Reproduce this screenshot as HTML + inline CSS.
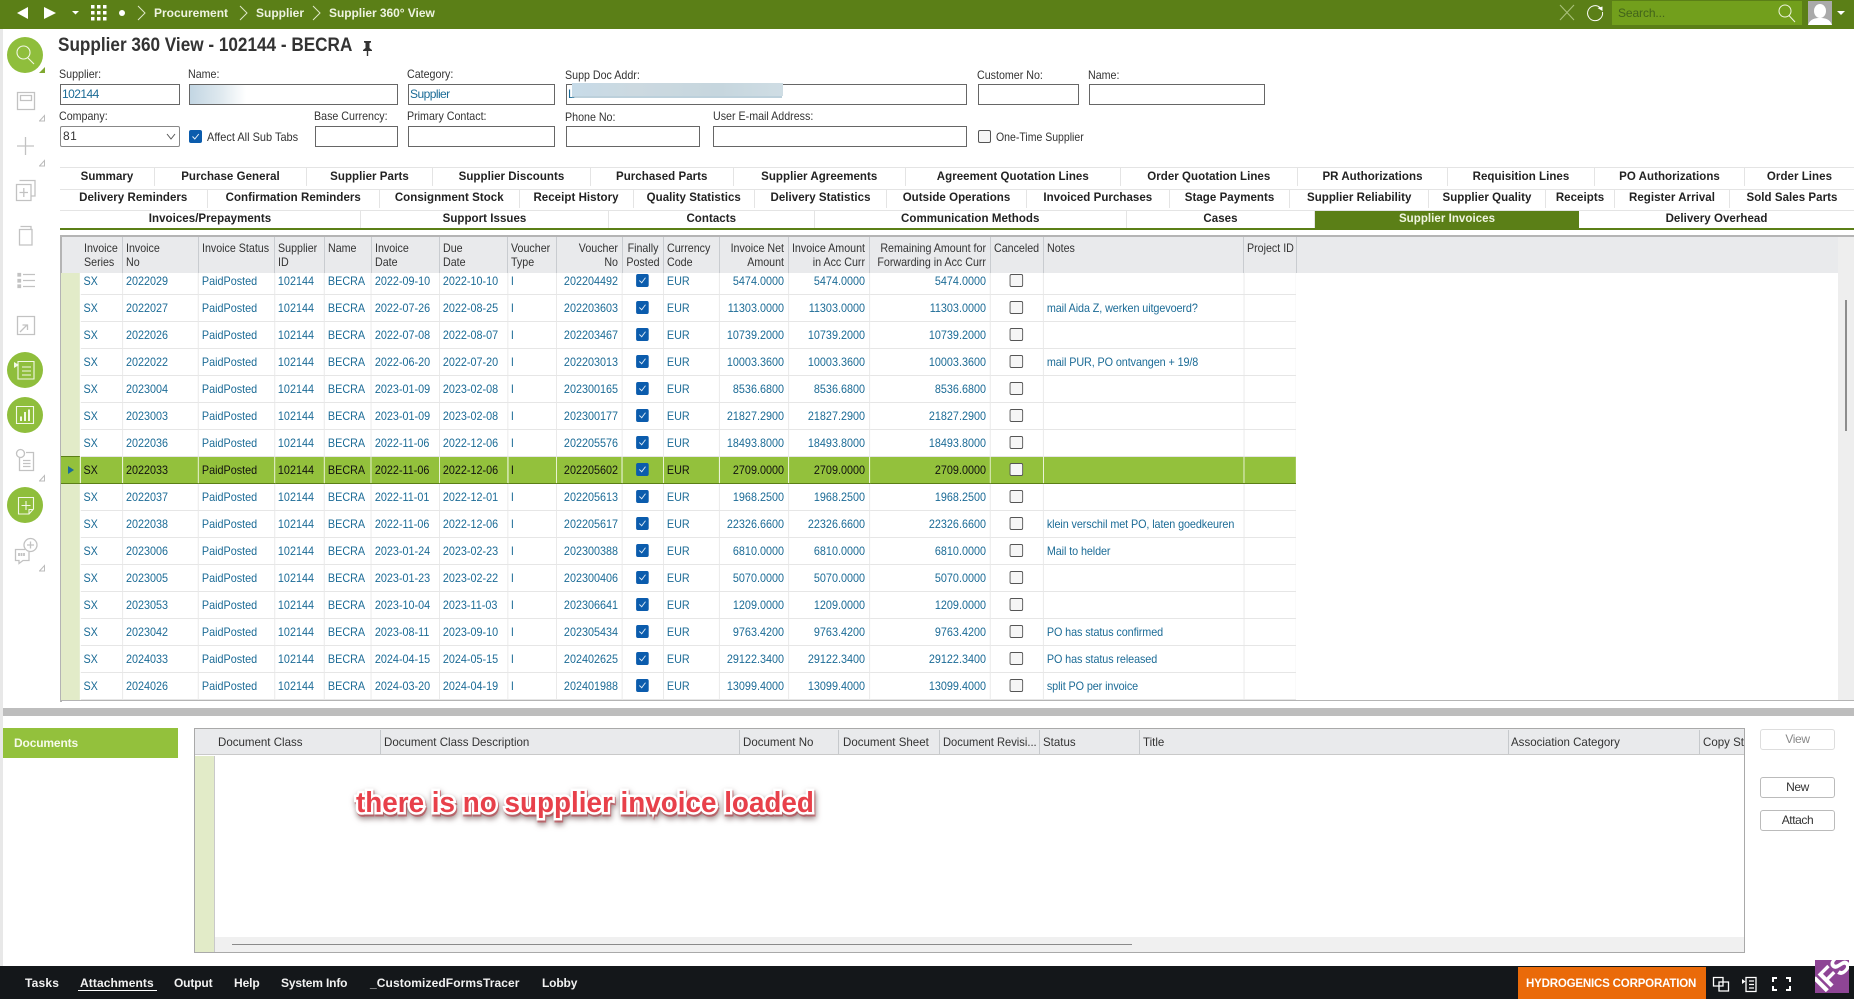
<!DOCTYPE html>
<html><head><meta charset="utf-8"><title>Supplier 360 View</title>
<style>
*{box-sizing:border-box}
html,body{margin:0;padding:0;background:#fff}
body{width:1854px;height:999px;position:relative;overflow:hidden;font-family:"Liberation Sans",sans-serif;color:#333;font-size:12px}
.a{position:absolute}
#top{left:0;top:0;width:1854px;height:29px;background:#5b7f17}
.bc{position:absolute;top:5px;color:#eef3e0;font-weight:bold;font-size:12px;line-height:16px;white-space:nowrap}
.lb{position:absolute;font-size:12px;line-height:14px;color:#333;white-space:nowrap;transform:scaleX(.89);transform-origin:0 0}
.in{position:absolute;height:21px;border:1px solid #666;background:#fff;font-size:12px;line-height:18px;padding-left:1px;color:#1b6b96;letter-spacing:-.55px;white-space:nowrap;overflow:hidden}
.cb{position:absolute;width:13px;height:13px;border-radius:2px}
.cb.on{background:#0b5cad}
.cb.off{background:#f6f6f6;border:1px solid #555}
.tr{position:absolute;left:60px;width:1794px;display:flex;border-top:1px solid #e4e4e4}
.tr div{height:100%;text-align:center;font-weight:bold;font-size:11.5px;color:#222;border-right:1px solid #e4e4e4;white-space:nowrap;flex:none;overflow:hidden;letter-spacing:.05px}
.tr div:last-child{border-right:0}
.tr div.act{background:#5b7f17;color:#f0f5e0;border-right:0;font-weight:bold}
#gridwrap{left:61px;top:273px;width:1235px;height:427px;overflow:hidden}
#g{position:absolute;left:0;top:-5.5px;border-collapse:collapse;table-layout:fixed;width:1372.2px;font-size:12px;color:#1b6b96;transform:scaleX(.9);transform-origin:0 0}
#g td{height:27px;padding:0 3.33px;border-right:1px solid #e8e8e8;border-bottom:1px solid #e6e6e6;white-space:nowrap;overflow:hidden;line-height:14px}
#g td:nth-child(17){letter-spacing:-.1px}
#g td.h{background:#e2ebc8;border-right:1px solid #fff;border-bottom:0;padding:0}
#g td.r{text-align:right;padding-right:4.44px}
#g td.c{padding:0;position:relative}
#g i{position:absolute;left:0;right:1.5px;margin:auto;top:6px;width:14.44px;height:13px;border-radius:2px;display:block}
#g i.y{background:#0b5cad}
#g i.y:after{content:"";position:absolute;left:5.2px;top:2.4px;width:3.2px;height:6px;border:solid #dce9f5;border-width:0 1px 1px 0;transform:rotate(40deg)}
#g i.n{background:#f6f6f6;border:1px solid #555}
#g tr.s td{background:#93c13c;color:#111;border-right:1px solid #e5f0cc;border-top:1px solid #5b7f17;border-bottom:1px solid #5b7f17}
#g tr.s td.h{background:#93c13c;border-right:1px solid #e5f0cc;border-top:1px solid #5b7f17;border-bottom:1px solid #5b7f17}
.gh{position:absolute;top:241px;font-size:12px;line-height:14px;color:#333;white-space:nowrap;transform:scaleX(.89);transform-origin:0 0}
.gh.R{text-align:right;transform-origin:100% 0}
.gh.C{text-align:center;transform-origin:50% 0}
.gs{position:absolute;top:237px;height:36px;width:1px;background:#c9ccd0}
.dh{position:absolute;top:735px;font-size:12px;line-height:14px;color:#333;white-space:nowrap;transform:scaleX(.96);transform-origin:0 0}
.ds{position:absolute;top:730px;height:24px;width:1px;background:#c6c9cc}
.btn{position:absolute;left:1760px;width:75px;height:21px;border:1px solid #bbb;border-radius:3px;background:#fff;text-align:center;font-size:12px;line-height:19px;letter-spacing:-.4px;color:#333}
.ft{position:absolute;top:975px;color:#f2f2f2;font-weight:bold;font-size:12px;line-height:16px;white-space:nowrap}
.sic{position:absolute;fill:none;stroke:#c2c2c2;stroke-width:1.3}
.cir{position:absolute;left:7px;width:36px;height:36px;border-radius:50%;background:#8fbe3c}
.cir svg{position:absolute;left:0;top:0;fill:none;stroke:#f3f8e6;stroke-width:1.1}
</style></head><body>

<div class="a" style="left:0;top:29px;width:3px;height:937px;background:#e8e8e8"></div>

<div id="top" class="a"></div>
<svg class="a" style="left:0;top:0" width="170" height="29">
<path d="M28 7V19L17 13Z" fill="#fff"/><path d="M44 7V19L56 13Z" fill="#fff"/><path d="M72 11H79L75.5 14.5Z" fill="#fff"/>
<g fill="#fff"><rect x="91" y="5" width="3.5" height="3.5"/><rect x="97" y="5" width="3.5" height="3.5"/><rect x="103" y="5" width="3.5" height="3.5"/><rect x="91" y="11" width="3.5" height="3.5"/><rect x="97" y="11" width="3.5" height="3.5"/><rect x="103" y="11" width="3.5" height="3.5"/><rect x="91" y="17" width="3.5" height="3.5"/><rect x="97" y="17" width="3.5" height="3.5"/><rect x="103" y="17" width="3.5" height="3.5"/></g>
<circle cx="122" cy="13" r="3" fill="#fff"/><path d="M138 6L145 13L138 20" stroke="#dfe8c8" fill="none"/></svg>
<div class="bc" style="left:154px">Procurement</div>
<svg class="a" style="left:238px;top:0" width="12" height="29"><path d="M2 6L9 13L2 20" stroke="#dfe8c8" fill="none"/></svg>
<div class="bc" style="left:256px">Supplier</div>
<svg class="a" style="left:311px;top:0" width="12" height="29"><path d="M2 6L9 13L2 20" stroke="#dfe8c8" fill="none"/></svg>
<div class="bc" style="left:329px;letter-spacing:-.05px">Supplier 360° View</div>

<svg class="a" style="left:1556px;top:0" width="50" height="29" fill="none"><path d="M4 5L18 20M18 5L4 20" stroke="#a9c07a" stroke-width="1.1"/><path d="M44 7.5A7.5 7.5 0 1 0 46.5 12" stroke="#fff" stroke-width="1"/><path d="M41.5 8L46.5 6.5V11Z" fill="#fff"/></svg>
<div class="a" style="left:1612px;top:1px;width:190px;height:24px;background:#729f1c"></div>
<div class="a" style="left:1618px;top:6px;font-size:12px;line-height:14px;color:#42631a;letter-spacing:-.1px">Search...</div>
<svg class="a" style="left:1776px;top:2px" width="22" height="22" fill="none" stroke="#eef4dd" stroke-width="1"><circle cx="9" cy="9" r="6"/><path d="M13 13.5L19 20"/></svg>
<svg class="a" style="left:1808px;top:1px" width="24" height="24"><rect width="24" height="24" fill="#aaa"/><ellipse cx="12" cy="10" rx="6" ry="7" fill="#fff"/><path d="M0 24C2 18 7 17 12 17S22 18 24 24Z" fill="#fff"/></svg>
<svg class="a" style="left:1836px;top:9px" width="10" height="7"><path d="M1 2H9L5 6Z" fill="#fff"/></svg>

<!-- side icons -->
<div class="cir" style="top:37px"><svg width="36" height="36"><circle cx="16.5" cy="15.5" r="6.5"/><path d="M21 21L27 27"/></svg></div>
<svg class="a" style="left:39px;top:67px" width="7" height="7"><path d="M6 0V6H0Z" fill="#7fa82f"/></svg>
<svg class="sic" style="left:16px;top:91px" width="20" height="20"><path d="M1.5 1.5H18.5V18.5H1.5Z"/><path d="M4.5 4.5H15.5V9.5H4.5Z"/></svg>
<svg class="sic" style="left:16px;top:137px" width="20" height="20"><path d="M9.5 0V18M1 9H18"/></svg>
<svg class="sic" style="left:15px;top:179px" width="22" height="23"><path d="M4.5 1.5H20V17H16"/><path d="M1.5 5.5H16V21.5H1.5Z"/><path d="M8.8 9V18M4.5 13.5H13"/></svg>
<svg class="sic" style="left:18px;top:225px" width="16" height="21"><path d="M1.5 4.5H14V20H1.5Z"/><path d="M2.5 1.5H13V4.5"/></svg>
<svg class="sic" style="left:17px;top:272px" width="19" height="17"><path d="M6 2.5H18M6 8.5H18M6 14.5H18"/><path d="M1 1.5H3.5V4H1ZM1 7.5H3.5V10H1ZM1 13H3.5V15.5H1Z" fill="#c2c2c2"/></svg>
<svg class="sic" style="left:16px;top:315px" width="20" height="21"><path d="M1.5 1.5H18.5V19.5H1.5Z"/><path d="M4 17L11 10M6.5 10H11.5V15"/></svg>
<div class="cir" style="top:352px"><svg width="36" height="36"><path d="M11 9.5H27V27H11Z"/><path d="M15 15H24M15 19H24M15 23H24"/><path d="M7 10V16L12 13Z" fill="#f3f8e6" stroke="none"/></svg></div>
<div class="cir" style="top:397px"><svg width="36" height="36"><path d="M9.5 9.5H26.5V26.5H9.5Z"/><path d="M13 19.5H15V24H13ZM17 15H19V24H17ZM21 12.5H23V24H21Z" fill="#f3f8e6" stroke="none"/></svg></div>
<svg class="sic" style="left:15px;top:448px" width="20" height="24"><circle cx="5.5" cy="5.5" r="4"/><path d="M11 4.5H18.5V22.5H4.5V10"/><path d="M8 12.5H15.5M8 15.5H15.5M8 18.5H15.5"/></svg>
<div class="cir" style="top:487px"><svg width="36" height="36"><path d="M11.5 10.5H26.5V22L22 27H11.5Z"/><path d="M19 14V23M14.5 18.5H23.5"/><path d="M22 27V22.5H26.5"/></svg></div>
<svg class="sic" style="left:13px;top:537px" width="26" height="28"><circle cx="17.5" cy="8" r="6.5"/><path d="M17.5 4.5V11.5M14 8H21"/><path d="M12 12.5H2.5V23.5H6V26.5L10 23.5H16V15"/><path d="M6 16V19M8.5 16V19M11 16V19" stroke-width="1.8"/></svg>
<svg class="a" style="left:39px;top:114px" width="7" height="8" fill="none" stroke="#bbb"><path d="M5.5 1.5V7H0.5Z"/></svg>
<svg class="a" style="left:39px;top:159px" width="7" height="8" fill="none" stroke="#bbb"><path d="M5.5 1.5V7H0.5Z"/></svg>
<svg class="a" style="left:39px;top:474px" width="7" height="8" fill="none" stroke="#bbb"><path d="M5.5 1.5V7H0.5Z"/></svg>
<svg class="a" style="left:39px;top:564px" width="7" height="8" fill="none" stroke="#bbb"><path d="M5.5 1.5V7H0.5Z"/></svg>

<!-- header -->
<div class="a" style="left:58px;top:35px;font-size:19px;line-height:22px;font-weight:bold;color:#333;white-space:nowrap;transform:scaleX(.903);transform-origin:0 0">Supplier 360 View - 102144 - BECRA</div>
<svg class="a" style="left:362px;top:40px" width="11" height="16"><path d="M2 1H9V2.5L7.5 3V8L10 10V11H6.2V16H4.8V11H1V10L3.5 8V3L2 2.5Z" fill="#333"/></svg>

<div class="lb" style="left:59px;top:67px">Supplier:</div>
<div class="lb" style="left:188px;top:67px">Name:</div>
<div class="lb" style="left:407px;top:67px">Category:</div>
<div class="lb" style="left:565px;top:68px">Supp Doc Addr:</div>
<div class="lb" style="left:977px;top:68px">Customer No:</div>
<div class="lb" style="left:1088px;top:68px">Name:</div>
<div class="in" style="left:60px;top:84px;width:120px">102144</div>
<div class="in" style="left:189px;top:84px;width:209px"></div>
<div class="a" style="left:190px;top:85px;width:56px;height:19px;background:linear-gradient(90deg,#c3d6e3,#dfe9ef 55%,#fff)"></div>
<div class="in" style="left:408px;top:84px;width:147px">Supplier</div>
<div class="in" style="left:566px;top:84px;width:401px">L</div>
<div class="a" style="left:572px;top:83px;width:211px;height:13px;background:linear-gradient(90deg,#c7dbe8,#ccd9e0 30%,#c6d6de 70%,#cfdde4)"></div>
<div class="a" style="left:572px;top:96px;width:210px;height:2px;background:#7aa2b8;opacity:.5"></div>
<div class="in" style="left:978px;top:84px;width:101px"></div>
<div class="in" style="left:1089px;top:84px;width:176px"></div>

<div class="lb" style="left:59px;top:109px">Company:</div>
<div class="in" style="left:60px;top:126px;width:120px;border-color:#888;border-radius:2px;color:#333;letter-spacing:.4px;padding-left:2px">81</div>
<svg class="a" style="left:165px;top:132px" width="12" height="9" fill="none" stroke="#555"><path d="M2 2L6 7L10 2"/></svg>
<div class="cb on" style="left:189px;top:130px"></div>
<svg class="a" style="left:189px;top:130px" width="13" height="13" fill="none" stroke="#e6f0fa"><path d="M3.5 6.5L5.8 9L9.8 4"/></svg>
<div class="lb" style="left:207px;top:130px;transform:scaleX(.915)">Affect All Sub Tabs</div>
<div class="lb" style="left:314px;top:109px">Base Currency:</div>
<div class="in" style="left:315px;top:126px;width:83px"></div>
<div class="lb" style="left:407px;top:109px">Primary Contact:</div>
<div class="in" style="left:408px;top:126px;width:147px"></div>
<div class="lb" style="left:565px;top:110px">Phone No:</div>
<div class="in" style="left:566px;top:126px;width:134px"></div>
<div class="lb" style="left:713px;top:109px">User E-mail Address:</div>
<div class="in" style="left:713px;top:126px;width:254px"></div>
<div class="cb off" style="left:978px;top:130px"></div>
<div class="lb" style="left:996px;top:130px;transform:scaleX(.875)">One-Time Supplier</div>

<!-- tabs -->
<div class="tr" style="top:167px;height:19px;line-height:18px">
<div style="width:95px">Summary</div><div style="width:152px">Purchase General</div><div style="width:126px">Supplier Parts</div><div style="width:158px">Supplier Discounts</div><div style="width:142.5px">Purchased Parts</div><div style="width:172.5px">Supplier Agreements</div><div style="width:214.6px">Agreement Quotation Lines</div><div style="width:177.4px">Order Quotation Lines</div><div style="width:150px">PR Authorizations</div><div style="width:147px">Requisition Lines</div><div style="width:150px">PO Authorizations</div><div style="width:109px">Order Lines</div>
</div>
<div class="tr" style="top:189px;height:19px;line-height:17px">
<div style="width:147.5px">Delivery Reminders</div><div style="width:172.5px">Confirmation Reminders</div><div style="width:139.5px">Consignment Stock</div><div style="width:114px">Receipt History</div><div style="width:121.5px">Quality Statistics</div><div style="width:132px">Delivery Statistics</div><div style="width:140px">Outside Operations</div><div style="width:142.6px">Invoiced Purchases</div><div style="width:120.9px">Stage Payments</div><div style="width:138.5px">Supplier Reliability</div><div style="width:117px">Supplier Quality</div><div style="width:69px">Receipts</div><div style="width:115px">Register Arrival</div><div style="width:124px">Sold Sales Parts</div>
</div>
<div class="tr" style="top:210px;height:18px;line-height:17px">
<div style="width:301px">Invoices/Prepayments</div><div style="width:248px">Support Issues</div><div style="width:205.5px">Contacts</div><div style="width:312.5px">Communication Methods</div><div style="width:188px">Cases</div><div class="act" style="width:264px">Supplier Invoices</div><div style="width:275px">Delivery Overhead</div>
</div>
<div class="a" style="left:60px;top:228px;width:1794px;height:2px;background:#5b7f17"></div>

<!-- main grid -->
<div class="a" style="left:60px;top:235px;width:1794px;height:2px;background:#b4b4b4"></div>
<div class="a" style="left:60px;top:235px;width:2px;height:467px;background:#b4b4b4"></div>
<div class="a" style="left:62px;top:237px;width:1776px;height:36px;background:#e9eaec"></div>
<div class="a" style="left:1838px;top:237px;width:16px;height:463px;background:#eee"></div>
<div class="a" style="left:1845px;top:300px;width:2px;height:131px;background:#8c8c8c"></div>

<div class="gs" style="left:122px"></div><div class="gs" style="left:198px"></div><div class="gs" style="left:274px"></div><div class="gs" style="left:324px"></div><div class="gs" style="left:371px"></div><div class="gs" style="left:439px"></div><div class="gs" style="left:507px"></div><div class="gs" style="left:556px"></div><div class="gs" style="left:622px"></div><div class="gs" style="left:663px"></div><div class="gs" style="left:719px"></div><div class="gs" style="left:788px"></div><div class="gs" style="left:869px"></div><div class="gs" style="left:990px"></div><div class="gs" style="left:1043px"></div><div class="gs" style="left:1243px"></div><div class="gs" style="left:1296px"></div>
<div class="gh" style="left:84px">Invoice<br>Series</div>
<div class="gh" style="left:126px">Invoice<br>No</div>
<div class="gh" style="left:202px">Invoice Status</div>
<div class="gh" style="left:278px">Supplier<br>ID</div>
<div class="gh" style="left:328px">Name</div>
<div class="gh" style="left:375px">Invoice<br>Date</div>
<div class="gh" style="left:443px">Due<br>Date</div>
<div class="gh" style="left:511px">Voucher<br>Type</div>
<div class="gh R" style="left:538px;width:80px">Voucher<br>No</div>
<div class="gh C" style="left:612.5px;width:60px">Finally<br>Posted</div>
<div class="gh" style="left:667px">Currency<br>Code</div>
<div class="gh R" style="left:694px;width:90px">Invoice Net<br>Amount</div>
<div class="gh R" style="left:745px;width:120px">Invoice Amount<br>in Acc Curr</div>
<div class="gh R" style="left:826px;width:160px">Remaining Amount for<br>Forwarding in Acc Curr</div>
<div class="gh" style="left:994px">Canceled</div>
<div class="gh" style="left:1047px">Notes</div>
<div class="gh" style="left:1247px">Project ID</div>

<div id="gridwrap" class="a">
<table id="g">
<colgroup><col style="width:21.11px"><col style="width:47.22px"><col style="width:84.44px"><col style="width:84.44px"><col style="width:55.56px"><col style="width:52.22px"><col style="width:75.56px"><col style="width:75.56px"><col style="width:54.44px"><col style="width:73.33px"><col style="width:45.56px"><col style="width:62.22px"><col style="width:76.67px"><col style="width:90px"><col style="width:134.44px"><col style="width:58.89px"><col style="width:222.78px"><col style="width:58.33px"></colgroup>
<tr><td class="h"><td>SX<td>2022029<td>PaidPosted<td>102144<td>BECRA<td>2022-09-10<td>2022-10-10<td>I<td class="r">202204492<td class="c"><i class="y"></i><td>EUR<td class="r">5474.0000<td class="r">5474.0000<td class="r">5474.0000<td class="c"><i class="n"></i><td><td></tr>
<tr><td class="h"><td>SX<td>2022027<td>PaidPosted<td>102144<td>BECRA<td>2022-07-26<td>2022-08-25<td>I<td class="r">202203603<td class="c"><i class="y"></i><td>EUR<td class="r">11303.0000<td class="r">11303.0000<td class="r">11303.0000<td class="c"><i class="n"></i><td>mail Aida Z, werken uitgevoerd?<td></tr>
<tr><td class="h"><td>SX<td>2022026<td>PaidPosted<td>102144<td>BECRA<td>2022-07-08<td>2022-08-07<td>I<td class="r">202203467<td class="c"><i class="y"></i><td>EUR<td class="r">10739.2000<td class="r">10739.2000<td class="r">10739.2000<td class="c"><i class="n"></i><td><td></tr>
<tr><td class="h"><td>SX<td>2022022<td>PaidPosted<td>102144<td>BECRA<td>2022-06-20<td>2022-07-20<td>I<td class="r">202203013<td class="c"><i class="y"></i><td>EUR<td class="r">10003.3600<td class="r">10003.3600<td class="r">10003.3600<td class="c"><i class="n"></i><td>mail PUR, PO ontvangen + 19/8<td></tr>
<tr><td class="h"><td>SX<td>2023004<td>PaidPosted<td>102144<td>BECRA<td>2023-01-09<td>2023-02-08<td>I<td class="r">202300165<td class="c"><i class="y"></i><td>EUR<td class="r">8536.6800<td class="r">8536.6800<td class="r">8536.6800<td class="c"><i class="n"></i><td><td></tr>
<tr><td class="h"><td>SX<td>2023003<td>PaidPosted<td>102144<td>BECRA<td>2023-01-09<td>2023-02-08<td>I<td class="r">202300177<td class="c"><i class="y"></i><td>EUR<td class="r">21827.2900<td class="r">21827.2900<td class="r">21827.2900<td class="c"><i class="n"></i><td><td></tr>
<tr><td class="h"><td>SX<td>2022036<td>PaidPosted<td>102144<td>BECRA<td>2022-11-06<td>2022-12-06<td>I<td class="r">202205576<td class="c"><i class="y"></i><td>EUR<td class="r">18493.8000<td class="r">18493.8000<td class="r">18493.8000<td class="c"><i class="n"></i><td><td></tr>
<tr class="s"><td class="h"><td>SX<td>2022033<td>PaidPosted<td>102144<td>BECRA<td>2022-11-06<td>2022-12-06<td>I<td class="r">202205602<td class="c"><i class="y"></i><td>EUR<td class="r">2709.0000<td class="r">2709.0000<td class="r">2709.0000<td class="c"><i class="n"></i><td><td></tr>
<tr><td class="h"><td>SX<td>2022037<td>PaidPosted<td>102144<td>BECRA<td>2022-11-01<td>2022-12-01<td>I<td class="r">202205613<td class="c"><i class="y"></i><td>EUR<td class="r">1968.2500<td class="r">1968.2500<td class="r">1968.2500<td class="c"><i class="n"></i><td><td></tr>
<tr><td class="h"><td>SX<td>2022038<td>PaidPosted<td>102144<td>BECRA<td>2022-11-06<td>2022-12-06<td>I<td class="r">202205617<td class="c"><i class="y"></i><td>EUR<td class="r">22326.6600<td class="r">22326.6600<td class="r">22326.6600<td class="c"><i class="n"></i><td>klein verschil met PO, laten goedkeuren<td></tr>
<tr><td class="h"><td>SX<td>2023006<td>PaidPosted<td>102144<td>BECRA<td>2023-01-24<td>2023-02-23<td>I<td class="r">202300388<td class="c"><i class="y"></i><td>EUR<td class="r">6810.0000<td class="r">6810.0000<td class="r">6810.0000<td class="c"><i class="n"></i><td>Mail to helder<td></tr>
<tr><td class="h"><td>SX<td>2023005<td>PaidPosted<td>102144<td>BECRA<td>2023-01-23<td>2023-02-22<td>I<td class="r">202300406<td class="c"><i class="y"></i><td>EUR<td class="r">5070.0000<td class="r">5070.0000<td class="r">5070.0000<td class="c"><i class="n"></i><td><td></tr>
<tr><td class="h"><td>SX<td>2023053<td>PaidPosted<td>102144<td>BECRA<td>2023-10-04<td>2023-11-03<td>I<td class="r">202306641<td class="c"><i class="y"></i><td>EUR<td class="r">1209.0000<td class="r">1209.0000<td class="r">1209.0000<td class="c"><i class="n"></i><td><td></tr>
<tr><td class="h"><td>SX<td>2023042<td>PaidPosted<td>102144<td>BECRA<td>2023-08-11<td>2023-09-10<td>I<td class="r">202305434<td class="c"><i class="y"></i><td>EUR<td class="r">9763.4200<td class="r">9763.4200<td class="r">9763.4200<td class="c"><i class="n"></i><td>PO has status confirmed<td></tr>
<tr><td class="h"><td>SX<td>2024033<td>PaidPosted<td>102144<td>BECRA<td>2024-04-15<td>2024-05-15<td>I<td class="r">202402625<td class="c"><i class="y"></i><td>EUR<td class="r">29122.3400<td class="r">29122.3400<td class="r">29122.3400<td class="c"><i class="n"></i><td>PO has status released<td></tr>
<tr><td class="h"><td>SX<td>2024026<td>PaidPosted<td>102144<td>BECRA<td>2024-03-20<td>2024-04-19<td>I<td class="r">202401988<td class="c"><i class="y"></i><td>EUR<td class="r">13099.4000<td class="r">13099.4000<td class="r">13099.4000<td class="c"><i class="n"></i><td>split PO per invoice<td></tr>
</table>
</div>
<svg class="a" style="left:67px;top:465px" width="8" height="10"><path d="M1 1V9L7 5Z" fill="#1b6b96"/></svg>
<div class="a" style="left:60px;top:700px;width:1794px;height:1px;background:#b4b4b4"></div>
<div class="a" style="left:3px;top:708px;width:1851px;height:8px;background:#bdbdbd"></div>

<!-- documents -->
<div class="a" style="left:3px;top:728px;width:175px;height:30px;background:#93c13c"></div>
<div class="a" style="left:14px;top:735px;color:#f6fae9;font-weight:bold;font-size:12px;line-height:16px;letter-spacing:-.15px">Documents</div>

<div class="a" style="left:194px;top:728px;width:1551px;height:225px;border:1px solid #a9a9a9;background:#fff"></div>
<div class="a" style="left:195px;top:729px;width:1549px;height:26px;background:#e9eaec;border-bottom:1px solid #c9c9c9"></div>
<div class="a" style="left:195px;top:756px;width:20px;height:196px;background:#e2ebc8;border-right:1px solid #c9c9c9"></div>
<div class="a" style="left:215px;top:937px;width:1529px;height:15px;background:#f0f0f0"></div>
<div class="a" style="left:232px;top:944px;width:900px;height:1px;background:#8a8a8a"></div>
<div class="ds" style="left:380px"></div><div class="ds" style="left:739px"></div><div class="ds" style="left:838px"></div><div class="ds" style="left:939px"></div><div class="ds" style="left:1039px"></div><div class="ds" style="left:1139px"></div><div class="ds" style="left:1508px"></div><div class="ds" style="left:1699px"></div>
<div class="dh" style="left:218px">Document Class</div>
<div class="dh" style="left:384px">Document Class Description</div>
<div class="dh" style="left:743px">Document No</div>
<div class="dh" style="left:843px">Document Sheet</div>
<div class="dh" style="left:943px;transform:scaleX(.93)">Document Revisi...</div>
<div class="dh" style="left:1043px">Status</div>
<div class="dh" style="left:1143px">Title</div>
<div class="dh" style="left:1511px">Association Category</div>
<div class="dh" style="left:1703px;width:43px;overflow:hidden">Copy Status</div>

<div class="a" style="left:356px;top:785px;font-size:29px;line-height:36px;font-weight:bold;color:#e8404a;white-space:nowrap;-webkit-text-stroke:5px #fff;paint-order:stroke fill;transform:scaleX(.96);transform-origin:0 0;filter:drop-shadow(1px 2px 0 rgba(190,50,60,.55)) drop-shadow(1px 3px 3px rgba(80,50,50,.6))">there is no supplier invoice loaded</div>

<div class="btn" style="top:729px;border-color:#ddd;color:#888">View</div>
<div class="btn" style="top:777px">New</div>
<div class="btn" style="top:810px">Attach</div>

<!-- footer -->
<div class="a" style="left:0;top:966px;width:1854px;height:33px;background:#14171a"></div>
<div class="ft" style="left:25px;letter-spacing:.2px">Tasks</div>
<div class="ft" style="left:80px;letter-spacing:.1px">Attachments</div>
<div class="a" style="left:78px;top:990px;width:79px;height:1px;background:#fff"></div>
<div class="ft" style="left:174px;letter-spacing:-.15px">Output</div>
<div class="ft" style="left:234px;letter-spacing:-.1px">Help</div>
<div class="ft" style="left:281px;letter-spacing:-.15px">System Info</div>
<div class="ft" style="left:370px;letter-spacing:.1px">_CustomizedFormsTracer</div>
<div class="ft" style="left:542px;letter-spacing:-.15px">Lobby</div>
<div class="a" style="left:1518px;top:967px;width:188px;height:32px;background:#ea6a09"></div>
<div class="a" style="left:1526px;top:975px;color:#fff;font-size:12px;font-weight:bold;line-height:16px;letter-spacing:-.2px;white-space:nowrap;transform:scaleX(.96);transform-origin:0 0">HYDROGENICS CORPORATION</div>
<svg class="a" style="left:1712px;top:976px" width="80" height="17" fill="none" stroke="#fff" stroke-width="1.3">
<path d="M1.5 1.5H11V10H1.5Z"/><path d="M7 6H16.5V15H7Z"/>
<path d="M34 1.5H44V15.5H34ZM37 5H42M37 8.5H42M37 12H42"/><path d="M30 3V8L33.5 5.5Z" fill="#fff" stroke="none"/>
<path d="M61 6V2H65M74 2H78V6M61 10V14H65M74 14H78V10" stroke-width="2"/></svg>
<div class="a" style="left:1815px;top:960px;width:34px;height:33px;background:#8e4595;overflow:hidden">
<div class="a" style="left:-13px;top:1px;width:60px;text-align:center;color:#fff;font-weight:bold;font-size:26px;line-height:24px;letter-spacing:-.5px;-webkit-text-stroke:.4px #fff;transform:rotate(-45deg);white-space:nowrap">IFS</div>
</div>
</body></html>
